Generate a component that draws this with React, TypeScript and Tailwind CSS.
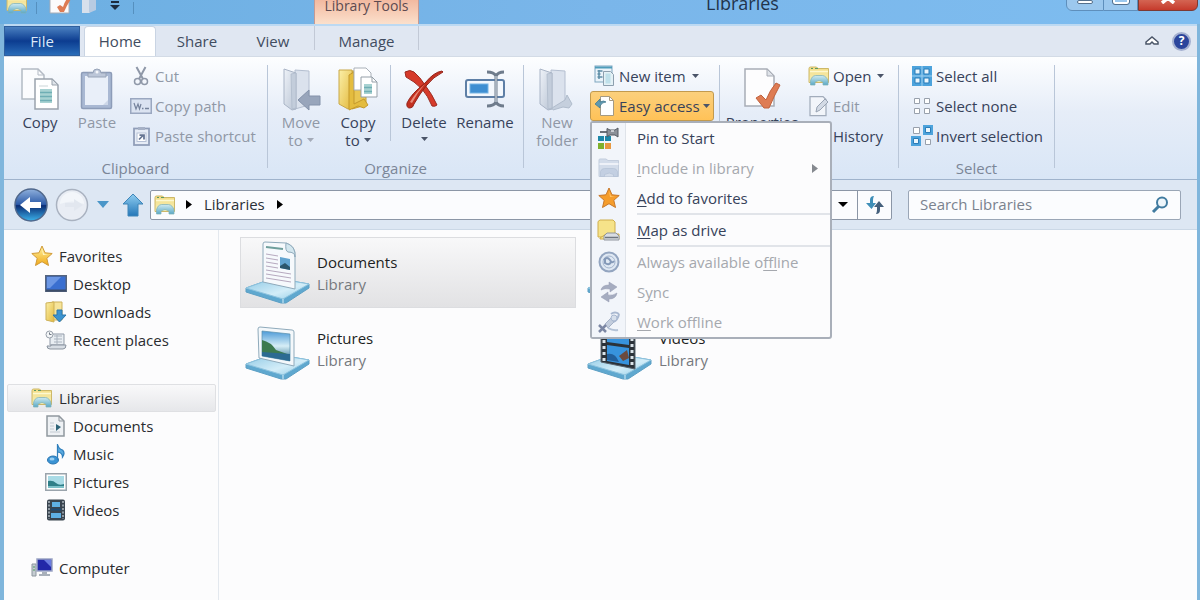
import type { ReactNode } from "react";

type IconProps = { className?: string };

/* Gradients shared by the icons below */
function Defs() {
  const v = { x1: "0", y1: "0", x2: "0", y2: "1" };
  return (
    <svg className="absolute h-0 w-0" aria-hidden="true">
      <defs>
        <linearGradient id="yellow" x1="0" y1="0" x2="1" y2="1">
          <stop offset="0" stopColor="#fbefa8" />
          <stop offset="1" stopColor="#e3b93c" />
        </linearGradient>
        <linearGradient id="cream" {...v}>
          <stop offset="0" stopColor="#f3dc84" />
          <stop offset="1" stopColor="#f6f0b8" />
        </linearGradient>
        <linearGradient id="grey" x1="0" y1="0" x2="1" y2="1">
          <stop offset="0" stopColor="#eef2f8" />
          <stop offset="1" stopColor="#b9c4d4" />
        </linearGradient>
        <linearGradient id="teal" {...v}>
          <stop offset="0" stopColor="#cfeaf0" />
          <stop offset="1" stopColor="#5aa9c6" />
        </linearGradient>
        <linearGradient id="blue" {...v}>
          <stop offset="0" stopColor="#8fcdf0" />
          <stop offset="1" stopColor="#2477b8" />
        </linearGradient>
        <linearGradient id="tray" x1="0" y1="0" x2="1" y2="1">
          <stop offset="0" stopColor="#8cc8e4" />
          <stop offset="0.6" stopColor="#d3edf8" />
          <stop offset="1" stopColor="#8fcbe6" />
        </linearGradient>
        <linearGradient id="orb" {...v}>
          <stop offset="0" stopColor="#8fb0dc" />
          <stop offset="0.48" stopColor="#2d5ba8" />
          <stop offset="0.52" stopColor="#0a2c74" />
          <stop offset="1" stopColor="#3cb2ea" />
        </linearGradient>
        <linearGradient id="star" {...v}>
          <stop offset="0" stopColor="#fff3a0" />
          <stop offset="1" stopColor="#f0a818" />
        </linearGradient>
        <linearGradient id="photo" {...v}>
          <stop offset="0" stopColor="#4c9ad8" />
          <stop offset="0.5" stopColor="#d6eef6" />
          <stop offset="1" stopColor="#2a6c8c" />
        </linearGradient>
      </defs>
    </svg>
  );
}

function Svg({ w, h, children, className }: { w: number; h: number; children: ReactNode; className?: string }) {
  return (
    <svg width={w} height={h} viewBox={`0 0 ${w} ${h}`} className={`shrink-0 ${className ?? ""}`} fill="none" aria-hidden="true">
      {children}
    </svg>
  );
}

const Down = ({ className = "fill-[#4a5468]" }: IconProps) => (
  <svg width="7" height="4" viewBox="0 0 7 4" className={`shrink-0 ${className}`} aria-hidden="true">
    <path d="M0 0h7L3.500 4z" />
  </svg>
);

const Right = ({ className = "fill-black" }: IconProps) => (
  <svg width="6" height="9" viewBox="0 0 6 9" className={`shrink-0 ${className}`} aria-hidden="true">
    <path d="M0 0v9l6-4.500z" />
  </svg>
);

const LibraryIcon = ({ className }: IconProps) => (
  <Svg w={22} h={20} className={className}>
    <path d="M1 2.500q0-1.500 1.500-1.500h6l1.500 1.500h10.500v14H1z" fill="url(#cream)" stroke="#cdb868" />
    <path d="M3 2.500h2M7 2.500h3" stroke="#5c9a64" />
    <path d="M2 5.500h18" stroke="#fdf8d0" strokeWidth="1.500" />
    <path d="M2.500 19v-4q1-5 5-5.500h7q4 .5 5.500 5.500v4h-5v-3q-4-3-8 0v3z" fill="url(#teal)" stroke="#7fb2b8" strokeWidth=".75" />
  </Svg>
);

const LibraryGrey = () => (
  <Svg w={22} h={20}>
    <path d="M1 2q0-1 1-1h6l2 1.500h10.500V18.500H1z" fill="#d3dcea" stroke="#c3cddd" />
    <path d="M1.500 6h19" stroke="#f7f9fc" strokeWidth="1.500" />
    <path d="M2.500 18.500v-5q1-3 4-3h9q3 0 4 3v5h-4v-2q-4-3-9 0v2z" fill="#c3cfe2" stroke="#b4c1d6" strokeWidth=".75" />
  </Svg>
);

const CopyIcon = () => (
  <Svg w={40} h={44}>
    <path d="M2 2h16l6 6v24H2z" fill="#fbfcfe" stroke="#b3bac4" strokeWidth="1.500" />
    <path d="M18 2v6h6" stroke="#b3bac4" />
    <path d="M15 12h17l6 6v24H15z" fill="#fff" stroke="#9aa3ad" strokeWidth="1.500" />
    <path d="M32 12v6h6z" fill="#dfe4ea" stroke="#9aa3ad" />
    <path d="M19 19h9" stroke="#ccd6d8" />
    <path d="M20 22h12v14H20z" fill="#a8d2d2" />
    <path d="M20 25.500h12M20 29.500h12M20 33.500h12" stroke="#6faeb4" strokeWidth="1.500" />
  </Svg>
);

const PasteIcon = () => (
  <Svg w={36} h={42}>
    <rect x="2.500" y="4.500" width="30" height="36" rx="1.500" fill="#a9b8d3" stroke="#8d9cb8" strokeWidth="1.500" />
    <path d="M6 8h23v29H6z" fill="#e9eff9" />
    <path d="M9 9V5h5q0-4 4-4t4 4h5v4z" fill="#bcc6d8" stroke="#98a4b8" />
    <circle cx="18" cy="4" r="1.500" fill="#f4f6fa" />
    <path d="M24 37l5-5v5z" fill="#cdd7e8" />
  </Svg>
);

const CutIcon = () => (
  <Svg w={16} h={20}>
    <path d="M3.500 1l6.500 12M12.500 1L6 13" stroke="#8f98a8" strokeWidth="2" />
    <circle cx="4.500" cy="15.500" r="3" stroke="#8f98a8" strokeWidth="1.500" />
    <circle cx="11.500" cy="15.500" r="3" stroke="#8f98a8" strokeWidth="1.500" />
  </Svg>
);

const CopyPathIcon = () => (
  <Svg w={22} h={16}>
    <rect x=".75" y=".75" width="20.500" height="14.500" fill="#dbe3f1" stroke="#9aa7c0" strokeWidth="1.500" />
    <path d="M4 5l2 6 2-5 1.500 5L11 6" stroke="#76839c" strokeWidth="1.200" />
    <path d="M12 10.500h1.500M15 10.500h4" stroke="#76839c" strokeWidth="1.500" />
  </Svg>
);

const PasteShortcutIcon = () => (
  <Svg w={17} h={20}>
    <rect x="1" y="2.500" width="15" height="16.500" fill="#e6ecf6" stroke="#8f9db8" strokeWidth="1.750" />
    <path d="M5 1h7v3H5z" fill="#a6b1c6" />
    <rect x="4" y="7" width="9" height="8.500" fill="#fff" stroke="#b6c1d6" />
    <path d="M6 13.500l4-4M6.500 9H11v4.500" stroke="#647492" strokeWidth="1.750" />
  </Svg>
);

const FolderGrey = ({ arrow }: { arrow?: boolean }) => (
  <Svg w={40} h={44}>
    <path d="M14 3l14 1v34l-14 4z" fill="#dbe2ed" stroke="#b4bfd0" />
    <path d="M3 2l12 4v36l-4 1-8-6z" fill="url(#grey)" stroke="#a9b4c6" />
    <path d="M10 7l5-1v35l-4 1z" fill="#c3cddb" stroke="#aeb9ca" strokeWidth=".75" />
    {arrow ? (
      <path d="M17 33l11-10v6h11v9H28v5z" fill="#98a5bb" stroke="#8492aa" />
    ) : (
      <path d="M15 41l13-8 2-5 5 9-3 4-6-1-10 3z" fill="#c5cfdd" stroke="#b0bccc" />
    )}
  </Svg>
);

const CopyToIcon = () => (
  <Svg w={42} h={44}>
    <path d="M15 4h14v34l-14 4z" fill="#e9c652" stroke="#c9a030" />
    <path d="M2 3h13v36l-4 3-9-5z" fill="url(#yellow)" stroke="#c9a848" />
    <path d="M12 8l5-3v32l10-5 4 6-4 3-6-2-9 4z" fill="#e4bc3e" stroke="#c4992c" />
    <path d="M17 1h12l5 5v17H17z" fill="#fff" stroke="#a9b0b8" />
    <path d="M24 10h11l5 5v15H24z" fill="#fff" stroke="#959fa8" />
    <path d="M35 10v5h5" stroke="#959fa8" />
    <path d="M27 17h8v10h-8z" fill="#a8d2d2" />
    <path d="M27 20.500h8M27 24.500h8" stroke="#6faeb4" strokeWidth="1.500" />
  </Svg>
);

const DeleteIcon = () => (
  <Svg w={42} h={42}>
    <path d="M2 4q5-3 9 0 6 5 11 13 7 9 12 20-2 2-5 1-4-10-10-17Q11 13 3 9z" fill="#d63a2a" stroke="#9c2a20" />
    <path d="M39 3q-8 1-17 12Q8 26 4 35q-1 5 3 5 3 0 4-4 5-9 12-18Q30 9 40 4z" fill="#c3301f" stroke="#96251b" />
    <path d="M7 34q6-10 15-18Q14 25 9 35z" fill="#e98b7a" />
  </Svg>
);

const RenameIcon = () => (
  <Svg w={42} h={38}>
    <rect x="2" y="10" width="38" height="17" rx="2" fill="#f4f8fd" stroke="#5e7fa6" strokeWidth="2" />
    <rect x="6" y="14" width="18" height="9" fill="#3f8fd2" stroke="#76b4e4" />
    <path d="M23 2q7 0 9 4 2-4 8-4M32 5v28M23 36q7 0 9-4 2 4 8 4" stroke="#6f7c8c" strokeWidth="3" />
    <path d="M32 6v26" stroke="#dfe6ee" strokeWidth="1" />
  </Svg>
);

const NewItemIcon = () => (
  <Svg w={22} h={22}>
    <rect x="1" y="1" width="17" height="16" fill="#eaf3fa" stroke="#7fa6bf" />
    <path d="M1 2.500h17" stroke="#4e9cba" strokeWidth="2" />
    <path d="M3.500 6h5M3.500 9h3M3.500 12h5M5 5v9" stroke="#5f8fa8" strokeWidth="1.500" />
    <path d="M9.500 6.500h7l3 3v11h-10z" fill="#e4f1f6" stroke="#8d9fae" />
    <path d="M11.500 8.500h5v10h-5z" fill="#bfe0ea" />
  </Svg>
);

const EasyAccessIcon = () => (
  <Svg w={22} h={22}>
    <path d="M6.500 1.500h9l4 4v15h-13z" fill="#fff" stroke="#a49a84" />
    <path d="M15.500 1.500v4h4" stroke="#a49a84" />
    <path d="M1 9l5-5v3q4-2 6 0-4 0-6 4v2z" fill="#5f99b0" stroke="#41788e" strokeWidth=".75" />
  </Svg>
);

const PropertiesIcon = () => (
  <Svg w={38} h={44}>
    <path d="M2 2h22l7 7v30H2z" fill="#fdfdfe" stroke="#a8adb6" strokeWidth="1.500" />
    <path d="M24 2v7h7z" fill="#dfe3e9" stroke="#a8adb6" />
    <path d="M13 31l5-3 5 5q4-10 10-17l4 2q-6 11-11 23h-5z" fill="#de7c54" stroke="#c0623e" />
  </Svg>
);

const EditIcon = () => (
  <Svg w={20} h={22}>
    <path d="M1 1.500h13l3 3v16H1z" fill="#f2f5fa" stroke="#a2acbb" strokeWidth="1.250" />
    <path d="M7 17l1-5 8-8 3 3-8 8z" fill="#d3dae5" stroke="#98a3b3" />
  </Svg>
);

const SelectAllIcon = () => (
  <Svg w={20} h={20}>
    <path d="M0 0h20v20H0z" fill="#4da3dc" />
    <path d="M3 3h5v5H3zM12 3h5v5h-5zM3 12h5v5H3zM12 12h5v5h-5z" fill="#eaf6fd" stroke="#2b7cb8" />
    <path d="M0 10h20M10 0v20" stroke="#9fd0f0" />
  </Svg>
);

const SelectNoneIcon = () => (
  <Svg w={20} h={18}>
    <path d="M2.500 1.500h5v5h-5zM12.500 1.500h5v5h-5zM2.500 11.500h5v5h-5zM12.500 11.500h5v5h-5z" fill="#fff" stroke="#98a0ac" />
  </Svg>
);

const InvertIcon = () => (
  <Svg w={22} h={22}>
    <path d="M2.500 2.500h6v6h-6zM14.500 14.500h5v5h-5z" fill="#fff" stroke="#98a0ac" />
    <path d="M12 0h10v10H12zM0 11h10v10H0z" fill="#4da3dc" />
    <path d="M14.500 2.500h5v5h-5zM2.500 13.500h5v5h-5z" fill="#eaf6fd" stroke="#2b7cb8" />
  </Svg>
);

const PinIcon = () => (
  <Svg w={24} h={22}>
    <path d="M1 9h6v5H1zM8 9h6v5H8z" fill="#1d87a8" />
    <path d="M1 16h6v6H1z" fill="#7fb02c" />
    <path d="M8 16h6v6H8z" fill="#e89840" />
    <path d="M3 5h7" stroke="#6b7078" strokeWidth="2" />
    <path d="M10 1.500l3 1.500h5l3-2v9l-3-2h-5l-3 1.500z" fill="#8b9098" stroke="#555a62" />
    <path d="M14 4h3" stroke="#e0e3e8" strokeWidth="1.500" />
  </Svg>
);

const StarIcon = ({ orange }: { orange?: boolean }) => (
  <Svg w={22} h={22}>
    <path
      d="M11 1l3 6.800 7.200.7-5.400 4.800 1.700 7.200L11 16.700l-6.500 3.800 1.700-7.200L.8 8.500 8 7.800z"
      fill={orange ? "#f59d2c" : "url(#star)"}
      stroke={orange ? "#c8782a" : "#d09a38"}
      strokeLinejoin="round"
    />
    <path d="M11 4l2 5 4 .5-5 .5z" fill={orange ? "#ffc468" : "#fff8cc"} />
  </Svg>
);

const MapDriveIcon = () => (
  <Svg w={24} h={22}>
    <path d="M1 2.500L3 1h13l2 2v15H1z" fill="#f6e389" stroke="#cfae4c" />
    <path d="M3 19l6-4h13v5H3z" fill="#f6e389" stroke="#cfae4c" />
    <path d="M7 17l3-3h9l3 3v4H7z" fill="#d9dde2" stroke="#8f969e" />
    <path d="M8 18.500h13" stroke="#6e757e" strokeWidth="1.500" />
  </Svg>
);

const OfflineIcon = () => (
  <Svg w={22} h={22}>
    <circle cx="11" cy="11" r="9.500" fill="#dfe8f3" stroke="#93a5c0" strokeWidth="2" />
    <circle cx="11" cy="11" r="6" stroke="#a4b5cd" />
    <path d="M6 9q3-4 6 0 2 4 4 1M7 7v5q4 3 6-1" stroke="#8499b8" strokeWidth="2" />
  </Svg>
);

const SyncIcon = () => (
  <Svg w={18} h={22}>
    <path d="M1 9q1-5 8-5V1l8 5-7 5V8q-5-1-9 1zM17 12q-1 6-8 6v3l-8-5 7-5v3q5 1 9-2z" fill="#a5acc0" stroke="#949bb0" strokeWidth=".5" />
  </Svg>
);

const WorkOfflineIcon = () => (
  <Svg w={22} h={22}>
    <path d="M7 13l6-6 3 4-6 6z" fill="#c3cddd" stroke="#a5b1c6" />
    <path d="M13 3q4-3 8 0M21 3q-1 6-6 8" stroke="#a9b8d0" strokeWidth="2" />
    <circle cx="16" cy="7" r="3" fill="#d6dfeb" stroke="#a9b8d0" />
    <path d="M10 17q5 3 10 2" stroke="#b4c2d6" strokeWidth="2" />
    <path d="M1 14l7 7M8 14l-7 7" stroke="#7c87a4" strokeWidth="2.500" />
  </Svg>
);

const DesktopIcon = () => (
  <Svg w={22} h={18}>
    <rect x=".75" y=".75" width="20.500" height="15.500" fill="#3a6fd0" stroke="#56657e" strokeWidth="1.500" />
    <path d="M2 2h14L5 13H2z" fill="#6c97e4" />
    <path d="M1 15.500h20" stroke="#3d4d68" strokeWidth="2" />
  </Svg>
);

const DownloadsIcon = () => (
  <Svg w={22} h={22}>
    <path d="M7 1h10v18H7z" fill="#f6e49a" stroke="#ceb25a" />
    <path d="M1 2l8-1v20l-8-2z" fill="url(#yellow)" stroke="#cdb158" />
    <path d="M12 9h5v5h4l-6.500 7L8 14h4z" fill="#3c93cf" stroke="#2b76ac" />
  </Svg>
);

const RecentIcon = () => (
  <Svg w={22} h={20}>
    <path d="M5 4h14v11H5z" fill="#e8edf2" stroke="#919ba8" />
    <path d="M9 6h8M9 9h8M9 12h8M12 5v9" stroke="#aab3be" />
    <circle cx="4.500" cy="4.500" r="3.500" fill="#f4f6f8" stroke="#98a0aa" />
    <path d="M4.500 2.500v2h2" stroke="#6f7884" />
    <path d="M6 15h15q0 4-3 4H5q-3 0-3-3h4z" fill="#d7dde4" stroke="#8a939f" />
  </Svg>
);

const DocSmall = () => (
  <Svg w={20} h={22}>
    <path d="M1 1h12l5 5v15H1z" fill="#eef1f4" stroke="#90989f" strokeWidth="1.500" />
    <path d="M13 1v5h5" stroke="#90989f" />
    <path d="M10 9l5 3-5 4z" fill="#2f6478" />
    <path d="M4 8h4M4 11h4M4 14h4M4 17h10" stroke="#c3cad2" />
  </Svg>
);

const MusicIcon = () => (
  <Svg w={20} h={22}>
    <ellipse cx="7" cy="17" rx="5.500" ry="4" fill="#3a93d4" stroke="#2a75b0" />
    <path d="M11.500 17V1q1 5 5 6 3 3 0 7 0-4-4.500-5" fill="#5aa9de" stroke="#2f7fbc" strokeWidth="1.250" />
    <ellipse cx="6" cy="16" rx="2.500" ry="1.500" fill="#9bd0f2" />
  </Svg>
);

const PicturesIcon = () => (
  <Svg w={22} h={18}>
    <rect x=".75" y=".75" width="20.500" height="16.500" fill="#fff" stroke="#9aa4ac" strokeWidth="1.500" />
    <path d="M3 3h16v12H3z" fill="#a9dbe6" />
    <path d="M3 8q5-1 8 2t8 1v4H3z" fill="#2f7f88" />
    <path d="M3 13h16v2H3z" fill="#7cc0c8" />
  </Svg>
);

const VideosIcon = () => (
  <Svg w={20} h={22}>
    <rect x="1" y=".5" width="18" height="21" rx="2" fill="#39444f" />
    <path d="M3 2v18M17 2v18" stroke="#aeb8c0" strokeWidth="1.500" strokeDasharray="2 1.500" />
    <path d="M6 3h8v5H6zM5 14h10v5H5z" fill="#5fb0e4" />
    <path d="M5 9.500h10v2H5z" fill="#1d4a74" />
  </Svg>
);

const ComputerIcon = () => (
  <Svg w={22} h={20}>
    <path d="M1 6h4v12H1z" fill="#c5ccd2" stroke="#8e979f" />
    <path d="M2 9h2M2 12h2" stroke="#4c9a60" />
    <rect x="6" y="1" width="15" height="12" fill="#2228a8" stroke="#9aa4c4" strokeWidth="1.500" />
    <path d="M13 2h7v7z" fill="#6a7ce0" />
    <path d="M11 14h5v2h3v2H8v-2h3z" fill="#a8b0ba" />
  </Svg>
);

function Tray({ children }: { children: ReactNode }) {
  return (
    <Svg w={66} h={66}>
      <path d="M1 48l28-10 35 6v4L41 63h-5L1 52z" fill="#5fa8cf" stroke="#5c9fc4" />
      <path d="M1 48l28-10 35 6-26 15z" fill="url(#tray)" stroke="#8ec3de" />
      <path d="M38 59v4" stroke="#d7eef8" />
      {children}
    </Svg>
  );
}

const DocTray = () => (
  <Tray>
    <path d="M18 4q0-2 2-2l21 1q10 3 9 14v32l-32-7z" fill="#f6f9fc" stroke="#8faabb" />
    <path d="M41 3q-1 8 2 9 7 0 7 5 1-11-9-14z" fill="#d3e6ee" stroke="#8faabb" />
    <path d="M21 7l17 2" stroke="#6f9f9c" strokeWidth="2" />
    <path d="M21 14l12 2M21 18l12 2M21 22l12 2M21 26l12 2M21 30l25 4M21 34l25 4M21 38l25 4" stroke="#b6a9bf" />
    <path d="M35 17l10 2v11l-10-2z" fill="#62a4d0" />
    <path d="M35 26l5-3 5 4v3l-10-2z" fill="#2b566c" />
  </Tray>
);

const PicTray = () => (
  <Tray>
    <path d="M13 13q0-2 2-2l32 3q2 0 2 2v34l-35-8z" fill="#f4f8fb" stroke="#8faabb" />
    <path d="M17 15l28 3v27l-28-5z" fill="url(#photo)" stroke="#5d93b0" strokeWidth=".75" />
    <path d="M17 24q9 2 14 10l14 5v2q-14 0-28-4z" fill="#3c7a50" />
    <path d="M17 36l28 2v7l-28-5z" fill="#2c6b92" />
  </Tray>
);

const MusicTray = () => (
  <Tray>
    <path d="M30 44V12q8 2 14 10" stroke="#3a8fd0" strokeWidth="4" />
    <ellipse cx="25" cy="44" rx="8" ry="6" fill="#3a8fd0" />
  </Tray>
);

const VideoTray = () => (
  <Tray>
    <path d="M14 4l34 5v44l-34-7z" fill="#2b3239" stroke="#59646e" />
    <path d="M17 6v40M45 10v42" stroke="#dbe4ea" strokeWidth="3" strokeDasharray="3 3" />
    <path d="M20 8l22 3v18l-22-3zM20 29l22 3v17l-22-4z" fill="#3793dd" />
    <path d="M32 40l8-6 2 8-6 3z" fill="#6b4a3e" />
    <path d="M20 38q8-2 12 8l-12-2z" fill="#215f9c" />
  </Tray>
);

/* Ribbon building blocks */
function BigButton({ icon, lines, width, muted, arrow }: { icon: ReactNode; lines: string[]; width: string; muted?: boolean; arrow?: "inline" | "below" }) {
  return (
    <button type="button" disabled={muted} className={`flex flex-col items-center leading-[18px] ${width} ${muted ? "text-[#9098a6]" : "text-[#37425a]"}`}>
      <span className="flex h-12 items-center">{icon}</span>
      {lines.map((line, i) => (
        <span key={line} className="flex items-center gap-1 whitespace-nowrap">
          {line}
          {arrow === "inline" && i === lines.length - 1 && <Down className={muted ? "fill-[#a4abb8]" : "fill-[#4a5468]"} />}
        </span>
      ))}
      {arrow === "below" && (
        <span className="flex h-4 items-center">
          <Down />
        </span>
      )}
    </button>
  );
}

function SmallButton({ icon, label, muted, arrow, active }: { icon?: ReactNode; label: string; muted?: boolean; arrow?: boolean; active?: boolean }) {
  return (
    <button
      type="button"
      disabled={muted}
      className={`flex h-[30px] items-center gap-[3px] rounded-[3px] border px-[3px] whitespace-nowrap ${muted ? "text-[#9098a6]" : "text-[#37425a]"} ${
        active ? "border-[#c29a4e] bg-linear-to-b from-[#fbd07c] to-[#ffc257]" : "border-transparent"
      }`}
    >
      <span className="flex w-[22px] justify-center">{icon}</span>
      {label}
      {arrow && <Down className={active ? "fill-[#4a5468]" : "ml-[3px] fill-[#4a5468]"} />}
    </button>
  );
}

function Group({ label, width, children }: { label: string; width: string; children: ReactNode }) {
  return (
    <section aria-label={label} className={`flex shrink-0 pt-2 ${width}`}>
      <div className="flex h-[110px] min-w-0 flex-1 flex-col">
        <div className="flex flex-1 items-start">{children}</div>
        <div className="h-[14px] text-center leading-[14px] text-[#7b8698]">{label}</div>
      </div>
      <span className="h-[103px] w-px bg-[#b9c6d8]" />
    </section>
  );
}

/* Easy access menu */
type MenuEntry = { icon: ReactNode; text: [string, string, string]; muted?: boolean; sub?: boolean; rule?: boolean };
const menu: MenuEntry[] = [
  { icon: <PinIcon />, text: ["Pin to Start", "", ""] },
  { icon: <LibraryGrey />, text: ["", "I", "nclude in library"], muted: true, sub: true },
  { icon: <StarIcon orange />, text: ["", "A", "dd to favorites"], rule: true },
  { icon: <MapDriveIcon />, text: ["", "M", "ap as drive"], rule: true },
  { icon: <OfflineIcon />, text: ["Always available o", "f", "fline"], muted: true },
  { icon: <SyncIcon />, text: ["S", "y", "nc"], muted: true },
  { icon: <WorkOfflineIcon />, text: ["", "W", "ork offline"], muted: true },
];

function EasyAccessMenu() {
  return (
    <ul role="menu" className="absolute top-full left-0 z-10 w-[242px] rounded-[3px] border-2 border-[#a9afb9] bg-[#fcfcfd]">
      {menu.map(({ icon, text, muted, sub, rule }) => (
        <li key={text.join("")} role="none">
          <button type="button" role="menuitem" disabled={muted} className={`flex h-[30px] w-full items-center text-left ${muted ? "text-[#a5a8ae]" : "text-[#37425a]"}`}>
            <span className="flex h-full w-[34px] items-center justify-center border-r border-[#dfe3e9] bg-[#f2f5fa]">{icon}</span>
            <span className="flex-1 pl-[11px]">
              {text[0]}
              <u className="underline-offset-2">{text[1]}</u>
              {text[2]}
            </span>
            {sub && <Right className="mr-3 fill-[#85898f]" />}
          </button>
          {rule && (
            <div className="flex h-[2px]">
              <span className="w-[34px] border-r border-[#dfe3e9] bg-[#f2f5fa]" />
              <span className="ml-[11px] flex-1 bg-[#e1e4e9]" />
            </div>
          )}
        </li>
      ))}
    </ul>
  );
}

function TitleBar() {
  return (
    <header className="flex h-6 items-start overflow-hidden bg-linear-to-r from-[#6cafe2] via-[#7ab6ea] to-[#7ebdf0]">
      <div className="flex h-[14px] w-[314px] shrink-0 items-end pl-[6px]">
        <LibraryIcon />
        <span className="ml-2 h-3 w-px bg-[#5590bf]" />
        <span className="ml-3 flex">
          <Svg w={22} h={24}>
            <path d="M1 1h15l4 4v18H1z" fill="#fbfbfc" stroke="#a8adb6" />
            <path d="M8 17l3-2 3 2q2-7 6-10l2 2q-4 6-7 13h-4z" fill="#de7c54" />
          </Svg>
        </span>
        <span className="ml-[10px] flex">
          <Svg w={16} h={24}>
            <path d="M1 2l8 2v19H1z" fill="#d7e0ec" />
            <path d="M8 4l7-2v18l-7 3z" fill="#b8cbe2" />
          </Svg>
        </span>
        <span className="mb-1 ml-3 flex">
          <Svg w={12} h={10}>
            <path d="M2 2h8" stroke="#1c2c40" strokeWidth="2" />
            <path d="M1 5h10L6 10z" fill="#1c2c40" />
          </Svg>
        </span>
        <span className="ml-3 h-3 w-px bg-[#5590bf]" />
      </div>
      <div className="h-6 w-[105px] shrink-0 border-x border-[#c49a94] bg-linear-to-b from-[#f2b9a0] to-[#fbe0cc] text-center text-sm leading-3 text-[#5c4a50]">
        Library Tools
      </div>
      <h1 className="flex-1 text-center text-lg leading-[6px] text-[#22344c]">Libraries</h1>
      <div className="mr-[2px] flex h-[11px] shrink-0 items-end">
        <button type="button" aria-label="Minimize" className="flex h-[22px] w-[38px] items-end justify-center rounded-bl-md border border-[#5e8fbc] bg-[#9cc8ee] pb-[6px]">
          <span className="h-1 w-4 rounded-xs border border-[#55708c] bg-white" />
        </button>
        <button type="button" aria-label="Maximize" className="flex h-[22px] w-[34px] items-end justify-center border-y border-r border-[#5e8fbc] bg-[#9cc8ee] pb-[6px]">
          <span className="h-3 w-4 rounded-xs border-2 border-white outline outline-[#55708c]" />
        </button>
        <button type="button" aria-label="Close" className="flex h-[22px] w-[60px] items-end justify-center rounded-br-md border border-[#7c3a34] bg-linear-to-b from-[#e08a78] to-[#c5392b] pb-[6px]">
          <Svg w={14} h={12}>
            <path d="M1 1l12 10M13 1L1 11" stroke="#fff" strokeWidth="3.500" />
          </Svg>
        </button>
      </div>
    </header>
  );
}

function Tabs() {
  return (
    <nav className="flex h-8 items-stretch border-t-2 border-[#bcd9f2] bg-[#e0e7f2] text-[#414c60]">
      <button type="button" className="w-[76px] border border-[#2f5f9e] bg-linear-to-b from-[#4a80c0] via-[#0c3c90] via-50% to-[#2a6cb8] text-[#dbe9f8]">
        File
      </button>
      <button type="button" className="ml-1 w-[72px] rounded-t-sm border border-b-0 border-[#c9d4e3] bg-white">
        Home
      </button>
      <button type="button" className="w-[82px]">
        Share
      </button>
      <button type="button" className="w-[70px]">
        View
      </button>
      <button type="button" className="mb-[6px] ml-[6px] w-[105px] border-x border-[#c2c9d6] pt-[6px] leading-4">
        Manage
      </button>
      <div className="ml-auto flex items-center gap-[13px] pr-[6px]">
        <button type="button" aria-label="Minimize the ribbon">
          <Svg w={14} h={10}>
            <path d="M1 8V6l6-5 6 5v2H9L7 6 5 8z" fill="#fff" stroke="#4a5568" strokeWidth="1.500" />
          </Svg>
        </button>
        <button type="button" aria-label="Help" className="flex size-[19px] items-center justify-center rounded-full border-2 border-[#a4b0d0] bg-[#2b459c] text-xs font-bold text-white">
          ?
        </button>
      </div>
    </nav>
  );
}

function Ribbon() {
  return (
    <div className="flex h-[124px] border-y border-t-[#d3dbe6] border-b-[#9fb3cc] bg-linear-to-b from-[#fdfeff] via-[#e6edf8] via-45% to-[#d9e6f6]">
      <Group label="Clipboard" width="w-[264px]">
        <BigButton icon={<CopyIcon />} lines={["Copy"]} width="w-[72px]" />
        <BigButton icon={<PasteIcon />} lines={["Paste"]} width="w-[42px]" muted />
        <div className="-mt-1 ml-2">
          <SmallButton icon={<CutIcon />} label="Cut" muted />
          <SmallButton icon={<CopyPathIcon />} label="Copy path" muted />
          <SmallButton icon={<PasteShortcutIcon />} label="Paste shortcut" muted />
        </div>
      </Group>
      <Group label="Organize" width="w-[256px]">
        <BigButton icon={<FolderGrey arrow />} lines={["Move", "to"]} width="w-[66px]" muted arrow="inline" />
        <BigButton icon={<CopyToIcon />} lines={["Copy", "to"]} width="w-[48px]" arrow="inline" />
        <span className="ml-2 h-[76px] w-px bg-[#b9c6d8]" />
        <BigButton icon={<DeleteIcon />} lines={["Delete"]} width="w-[66px]" arrow="below" />
        <BigButton icon={<RenameIcon />} lines={["Rename"]} width="w-[56px]" />
      </Group>
      <Group label="New" width="w-[196px]">
        <BigButton icon={<FolderGrey />} lines={["New", "folder"]} width="w-[66px]" muted />
        <div className="-mt-1">
          <SmallButton icon={<NewItemIcon />} label="New item" arrow />
          <div className="relative">
            <SmallButton icon={<EasyAccessIcon />} label="Easy access" arrow active />
            <EasyAccessMenu />
          </div>
        </div>
      </Group>
      <Group label="Open" width="w-[179px]">
        <BigButton icon={<PropertiesIcon />} lines={["Properties"]} width="w-[84px]" />
        <div className="-mt-1">
          <SmallButton icon={<LibraryIcon />} label="Open" arrow />
          <SmallButton icon={<EditIcon />} label="Edit" muted />
          <SmallButton label="History" />
        </div>
      </Group>
      <Group label="Select" width="w-[156px]">
        <div className="-mt-1 ml-2">
          <SmallButton icon={<SelectAllIcon />} label="Select all" />
          <SmallButton icon={<SelectNoneIcon />} label="Select none" />
          <SmallButton icon={<InvertIcon />} label="Invert selection" />
        </div>
      </Group>
    </div>
  );
}

function AddressRow() {
  return (
    <div className="flex h-[50px] items-center border-b border-[#cbd8e6] bg-[#dde7f3] pr-4 pl-[10px]">
      <button type="button" aria-label="Back">
        <Svg w={34} h={34}>
          <circle cx="17" cy="17" r="16" fill="url(#orb)" stroke="#50688c" strokeWidth="1.500" />
          <path d="M6 17l10-8v5h11v6H16v5z" fill="#fff" />
        </Svg>
      </button>
      <button type="button" aria-label="Forward" className="ml-[7px]">
        <Svg w={34} h={34}>
          <circle cx="17" cy="17" r="15.500" fill="#e9edf4" stroke="#a9b2c0" strokeWidth="1.500" />
          <path d="M5 16a12 12 0 0124 0q-12-5-24 0z" fill="#f3f6fa" />
          <path d="M28 17l-9-6v4h-9v4h9v4z" fill="#e2e7ef" />
        </Svg>
      </button>
      <button type="button" aria-label="Recent locations" className="ml-2">
        <Svg w={12} h={7}>
          <path d="M0 0h12L6 7z" fill="#4a96c8" />
        </Svg>
      </button>
      <button type="button" aria-label="Up" className="ml-[13px]">
        <Svg w={22} h={24}>
          <path d="M11 1l10 10h-5v12H6V11H1z" fill="url(#blue)" stroke="#3f86b8" />
        </Svg>
      </button>
      <div className="ml-[6px] flex h-[30px] flex-1 items-center rounded-xs border border-[#8b96a6] bg-[#fbfcfe] pl-[3px] text-[#2b3038]">
        <LibraryIcon />
        <Right className="ml-[10px] fill-black" />
        <a href="#libraries" className="ml-3">
          Libraries
        </a>
        <Right className="ml-3 fill-black" />
        <button type="button" aria-label="Previous locations" className="ml-auto flex h-full w-[28px] items-center justify-center">
          <Svg w={10} h={5}>
            <path d="M0 0h10L5 5z" fill="#000" />
          </Svg>
        </button>
        <button type="button" aria-label="Refresh" className="flex h-full w-[34px] items-center justify-center border-l border-[#8b96a6]">
          <Svg w={20} h={20}>
            <path d="M9 1Q5 1 5 5v3H1l5.500 6L11 8H8V5q0-2 1-4z" fill="#3f8fb8" />
            <path d="M11 19q4 0 4-4v-3h4l-5-6-5 6h3v3q0 2-1 4z" fill="#44607c" />
          </Svg>
        </button>
      </div>
      <label className="ml-4 flex h-[30px] w-[273px] items-center rounded-xs border border-[#9aa6b6] bg-[#fbfcfe] px-[11px]">
        <input type="search" aria-label="Search Libraries" placeholder="Search Libraries" className="min-w-0 flex-1 bg-transparent outline-none placeholder:text-[#7a828e]" />
        <Svg w={18} h={18}>
          <circle cx="11" cy="6.500" r="5" fill="#eef6fb" stroke="#417ba0" strokeWidth="2" />
          <path d="M7.500 10.500L2 16" stroke="#417ba0" strokeWidth="3" />
        </Svg>
      </label>
    </div>
  );
}

function TreeItem({ icon, label, level, selected }: { icon: ReactNode; label: string; level: 0 | 1; selected?: boolean }) {
  return (
    <li>
      <a
        href={`#${label}`}
        className={`mr-[2px] ml-[3px] flex h-7 items-center gap-[6px] rounded-xs border ${level ? "pl-[37px]" : "pl-[23px]"} ${
          selected ? "border-[#dfe0e3] bg-linear-to-b from-[#f9f9fa] to-[#e6e7ea]" : "border-transparent"
        }`}
      >
        <span className="flex w-[22px] justify-center">{icon}</span>
        {label}
      </a>
    </li>
  );
}

function Sidebar() {
  return (
    <aside className="flex w-[215px] shrink-0 flex-col gap-[30px] border-r border-[#e3e8ee] pt-3 text-[#2a2c30]">
      <ul>
        <TreeItem icon={<StarIcon />} label="Favorites" level={0} />
        <TreeItem icon={<DesktopIcon />} label="Desktop" level={1} />
        <TreeItem icon={<DownloadsIcon />} label="Downloads" level={1} />
        <TreeItem icon={<RecentIcon />} label="Recent places" level={1} />
      </ul>
      <ul>
        <TreeItem icon={<LibraryIcon />} label="Libraries" level={0} selected />
        <TreeItem icon={<DocSmall />} label="Documents" level={1} />
        <TreeItem icon={<MusicIcon />} label="Music" level={1} />
        <TreeItem icon={<PicturesIcon />} label="Pictures" level={1} />
        <TreeItem icon={<VideosIcon />} label="Videos" level={1} />
      </ul>
      <ul>
        <TreeItem icon={<ComputerIcon />} label="Computer" level={0} />
      </ul>
    </aside>
  );
}

function Tile({ icon, name, selected }: { icon: ReactNode; name: string; selected?: boolean }) {
  return (
    <button
      type="button"
      className={`flex h-[71px] items-center gap-[6px] border pl-1 text-left ${
        selected ? "border-[#dcdde0] bg-linear-to-b from-[#f8f8f9] to-[#e2e2e4]" : "border-transparent"
      }`}
    >
      {icon}
      <span className="leading-[22px]">
        <span className="block text-[#1d1f23]">{name}</span>
        <span className="block text-[#76797e]">Library</span>
      </span>
    </button>
  );
}

export default function App() {
  return (
    <div className="flex min-h-screen flex-col overflow-hidden bg-[#7ab6ea] font-['Open_Sans','Noto_Sans',sans-serif] text-[15px]">
      <Defs />
      <TitleBar />
      <div className="flex flex-1 flex-col border-r-3 border-l-4 border-[#80b6dc]">
        <Tabs />
        <Ribbon />
        <AddressRow />
        <div className="flex flex-1 bg-[#fcfcfd]">
          <Sidebar />
          <main className="grid flex-1 grid-cols-[336px_336px] content-start gap-x-[6px] gap-y-[5px] pt-[7px] pl-[21px]">
            <Tile icon={<DocTray />} name="Documents" selected />
            <Tile icon={<MusicTray />} name="Music" />
            <Tile icon={<PicTray />} name="Pictures" />
            <Tile icon={<VideoTray />} name="Videos" />
          </main>
        </div>
      </div>
    </div>
  );
}
